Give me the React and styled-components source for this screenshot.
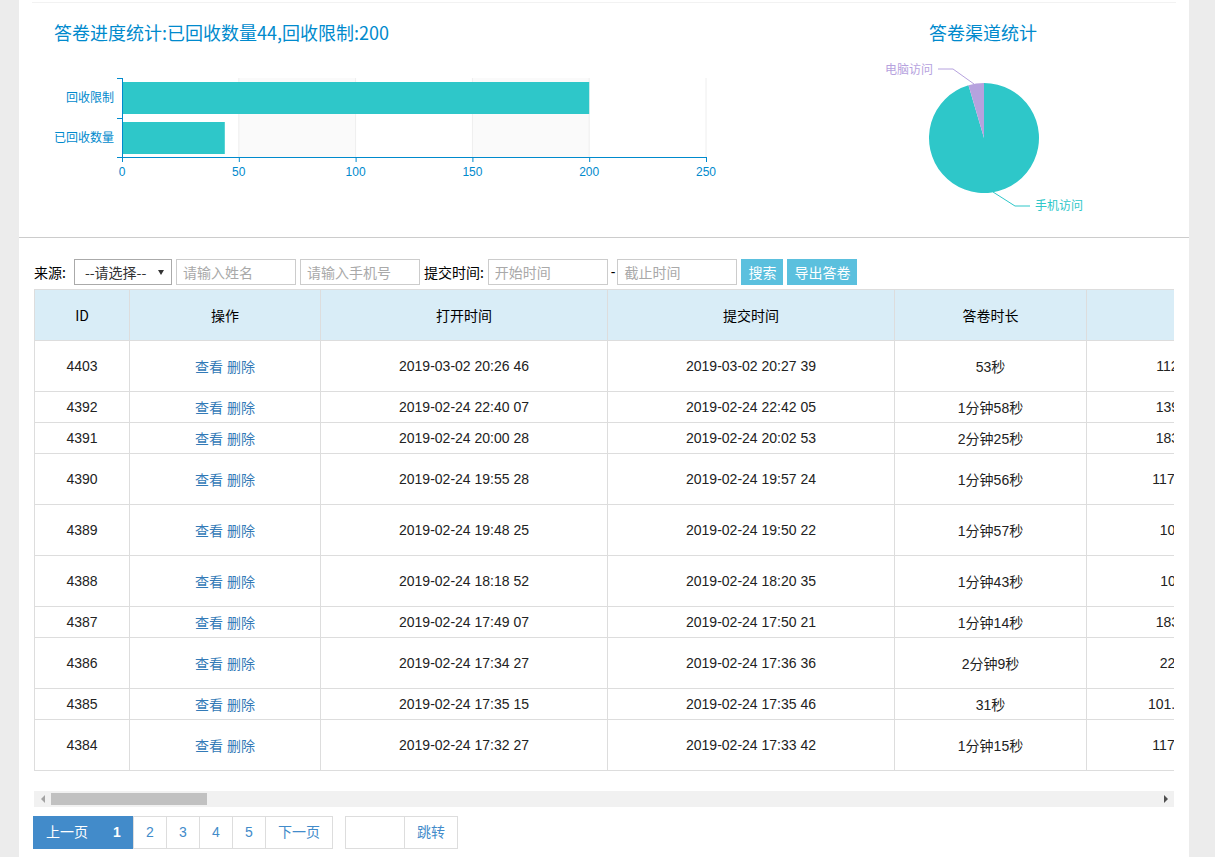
import React from "react";
import styled, { createGlobalStyle } from "styled-components";

const GlobalStyle = createGlobalStyle`
  html, body {
    margin: 0;
    padding: 0;
    background: #ececec;
    font-family: "Liberation Sans", "Noto Sans CJK SC", sans-serif;
    font-size: 14px;
    color: #333;
  }
  * { box-sizing: border-box; }
`;

const rows = [
  { id: 4403, open: "2019-03-02 20:26 46", submit: "2019-03-02 20:27 39", dur: "53秒", ip: "112.17.236.45", tall: true },
  { id: 4392, open: "2019-02-24 22:40 07", submit: "2019-02-24 22:42 05", dur: "1分钟58秒", ip: "139.207.62.18", tall: false },
  { id: 4391, open: "2019-02-24 20:00 28", submit: "2019-02-24 20:02 53", dur: "2分钟25秒", ip: "183.14.133.71", tall: false },
  { id: 4390, open: "2019-02-24 19:55 28", submit: "2019-02-24 19:57 24", dur: "1分钟56秒", ip: "117.136.40.212", tall: true },
  { id: 4389, open: "2019-02-24 19:48 25", submit: "2019-02-24 19:50 22", dur: "1分钟57秒", ip: "106.8.12.178", tall: true },
  { id: 4388, open: "2019-02-24 18:18 52", submit: "2019-02-24 18:20 35", dur: "1分钟43秒", ip: "101.8.45.119", tall: true },
  { id: 4387, open: "2019-02-24 17:49 07", submit: "2019-02-24 17:50 21", dur: "1分钟14秒", ip: "183.46.210.33", tall: false },
  { id: 4386, open: "2019-02-24 17:34 27", submit: "2019-02-24 17:36 36", dur: "2分钟9秒", ip: "223.104.6.20", tall: true },
  { id: 4385, open: "2019-02-24 17:35 15", submit: "2019-02-24 17:35 46", dur: "31秒", ip: "101.226.103.106", tall: false },
  { id: 4384, open: "2019-02-24 17:32 27", submit: "2019-02-24 17:33 42", dur: "1分钟15秒", ip: "117.136.79.153", tall: true },
];

const columns = [
  { title: "ID", w: 95 },
  { title: "操作", w: 191 },
  { title: "打开时间", w: 287 },
  { title: "提交时间", w: 287 },
  { title: "答卷时长", w: 192 },
  { title: "IP地址", w: 228 },
];

const TEAL = "#2ec7c9";
const PURPLE = "#b6a2de";
const AXIS = "#008acd";

const Panel = styled.div`
  margin-left: 19px;
  width: 1170px;
  min-height: 857px;
  background: #fff;
`;

const TopLine = styled.div`
  height: 3px;
  margin: 0 13px;
  border-bottom: 1px solid #f2f2f2;
`;

const ChartRow = styled.div`
  display: flex;
  height: 235px;
  border-bottom: 1px solid #ccc;
`;

const BarBlock = styled.div`
  width: 790px;
  display: flex;
  flex-direction: column;
`;

const PieBlock = styled.div`
  width: 348px;
  display: flex;
  flex-direction: column;
`;

const ChartTitle = styled.div`
  height: 47px;
  padding-top: 16px;
  padding-left: ${(p) => (p.$center ? 0 : 35)}px;
  text-align: ${(p) => (p.$center ? "center" : "left")};
  line-height: 26px;
  font-size: 18px;
  color: ${AXIS};
  font-family: "Noto Sans CJK SC", "Liberation Sans", sans-serif;
`;

const ChartSvg = styled.svg`
  display: block;
  font-family: "Liberation Sans", "Noto Sans CJK SC", sans-serif;
  font-size: 12px;
`;

const FilterBar = styled.div`
  display: flex;
  align-items: center;
  gap: 4px;
  padding: 20px 15px 0;
  height: 48px;
`;

const Label = styled.span`
  margin-right: ${(p) => p.$mr || 0}px;
  font-size: 14px;
  color: #000;
  font-family: "Noto Sans CJK SC", "Liberation Sans", sans-serif;
`;

const SelectBox = styled.div`
  position: relative;
  width: 98px;
  height: 26px;
  border: 1px solid #aaa;
  padding-left: 10px;
  line-height: 24px;
  font-size: 14px;
  color: #333;
  font-family: "Noto Sans CJK SC", "Liberation Sans", sans-serif;

  &::after {
    content: "";
    position: absolute;
    right: 7px;
    top: 10px;
    border-left: 3px solid transparent;
    border-right: 3px solid transparent;
    border-top: 5px solid #333;
  }
`;

const TextInput = styled.input`
  width: 120px;
  height: 26px;
  border: 1px solid #ccc;
  padding: 0 6px;
  font-size: 14px;
  font-family: "Noto Sans CJK SC", "Liberation Sans", sans-serif;
  outline: none;

  &::placeholder {
    color: #a9a9a9;
  }
`;

const Dash = styled.span`
  margin: 0 -2px 0 -1px;
  color: #000;
`;

const InfoButton = styled.button`
  height: 26px;
  padding: 0 7px;
  border: none;
  background: #5bc0de;
  color: #fff;
  font-size: 14px;
  font-family: "Noto Sans CJK SC", "Liberation Sans", sans-serif;
  cursor: pointer;
`;

const ScrollWrap = styled.div`
  margin: 3px 15px 0;
  overflow: hidden;
`;

const Table = styled.table`
  width: 1280px;
  table-layout: fixed;
  border-collapse: collapse;
  border: 1px solid #ddd;
`;

const HeadCell = styled.th`
  width: ${(p) => p.$w}px;
  height: 51px;
  padding: 0 8px;
  background: #d9edf7;
  border: 1px solid #ddd;
  font-weight: normal;
  color: #000;
  text-align: center;
  font-family: "Noto Sans CJK SC", "Liberation Sans", sans-serif;
`;

const Cell = styled.td`
  height: ${(p) => (p.$tall ? 51 : 31)}px;
  padding: 0 8px;
  border: 1px solid #ddd;
  text-align: center;
  white-space: nowrap;
  color: #222;
  font-family: "Liberation Sans", "Noto Sans CJK SC", sans-serif;
`;

const ActionLink = styled.a`
  color: #337ab7;
  text-decoration: none;
  font-family: "Noto Sans CJK SC", "Liberation Sans", sans-serif;
  & + & { margin-left: 4px; }
`;

const ScrollTrack = styled.div`
  display: flex;
  align-items: center;
  margin-top: 20px;
  height: 16px;
  background: #f1f1f1;
`;

const ScrollArrow = styled.div`
  width: 17px;
  height: 16px;
  display: flex;
  align-items: center;
  justify-content: center;

  &::before {
    content: "";
    border-top: 4px solid transparent;
    border-bottom: 4px solid transparent;
    ${(p) =>
      p.$dir === "left"
        ? "border-right: 4px solid #a3a3a3;"
        : "border-left: 4px solid #505050;"}
  }
`;

const ScrollThumb = styled.div`
  width: 156px;
  height: 12px;
  background: #c1c1c1;
`;

const ScrollSpace = styled.div`
  flex: 1;
`;

const Pager = styled.div`
  display: flex;
  align-items: center;
  margin: 9px 0 0 14px;
`;

const PageItem = styled.a`
  width: ${(p) => p.$w}px;
  height: 33px;
  line-height: 31px;
  text-align: center;
  border: 1px solid ${(p) => (p.$active ? "#428bca" : "#ddd")};
  margin-left: ${(p) => (p.$first ? 0 : -1)}px;
  background: ${(p) => (p.$active ? "#428bca" : "#fff")};
  color: ${(p) => (p.$active ? "#fff" : "#428bca")};
  font-weight: ${(p) => (p.$bold ? "bold" : "normal")};
  font-size: 14px;
  font-family: "Liberation Sans", "Noto Sans CJK SC", sans-serif;
  text-decoration: none;
`;

const JumpGroup = styled.div`
  display: flex;
  margin-left: 12px;
`;

const JumpInput = styled.input`
  width: 60px;
  height: 33px;
  border: 1px solid #ddd;
  outline: none;
`;

const BarChart = () => {
  const x0 = 103;
  const unit = 584 / 250;
  const ticks = [0, 50, 100, 150, 200, 250];
  return (
    <ChartSvg width="790" height="184">
      <rect x={x0 + 50 * unit} y="28" width={50 * unit} height="79" fill="#fafafa" />
      <rect x={x0 + 150 * unit} y="28" width={50 * unit} height="79" fill="#fafafa" />
      {ticks.slice(1).map((t) => (
        <line key={t} x1={x0 + t * unit} x2={x0 + t * unit} y1="28" y2="107" stroke="#eee" />
      ))}
      <rect x={x0} y="32" width={200 * unit} height="32" fill={TEAL} />
      <rect x={x0} y="72" width={44 * unit} height="32" fill={TEAL} />
      <line x1={x0 + 0.5} x2={x0 + 0.5} y1="28" y2="107" stroke={AXIS} />
      <line x1={x0} x2={x0 + 584} y1="107.5" y2="107.5" stroke={AXIS} />
      {[28, 68, 107].map((y) => (
        <line key={y} x1={x0 - 5} x2={x0} y1={y + 0.5} y2={y + 0.5} stroke={AXIS} />
      ))}
      {ticks.map((t) => (
        <g key={t}>
          <line x1={x0 + t * unit + 0.5} x2={x0 + t * unit + 0.5} y1="107" y2="112" stroke={AXIS} />
          <text x={x0 + t * unit} y="126" textAnchor="middle" fill={AXIS}>{t}</text>
        </g>
      ))}
      <text x="95" y="52" textAnchor="end" fill={AXIS}>回收限制</text>
      <text x="95" y="92" textAnchor="end" fill={AXIS}>已回收数量</text>
    </ChartSvg>
  );
};

const PieChart = () => {
  const cx = 175;
  const cy = 88;
  const r = 55;
  const a = (-16.4 * Math.PI) / 180;
  const px = cx + r * Math.sin(a);
  const py = cy - r * Math.cos(a);
  return (
    <ChartSvg width="348" height="184">
      <path d={`M${cx} ${cy} L${cx} ${cy - r} A${r} ${r} 0 1 1 ${px} ${py} Z`} fill={TEAL} />
      <path d={`M${cx} ${cy} L${px} ${py} A${r} ${r} 0 0 1 ${cx} ${cy - r} Z`} fill={PURPLE} />
      <polyline points="165,34 144,19 129,19" fill="none" stroke={PURPLE} />
      <text x="124" y="24" textAnchor="end" fill={PURPLE}>电脑访问</text>
      <polyline points="184,142 206,156 221,156" fill="none" stroke={TEAL} />
      <text x="226" y="160" fill={TEAL}>手机访问</text>
    </ChartSvg>
  );
};

const App = () => {
  return (
    <>
      <GlobalStyle />
      <Panel>
        <TopLine />
        <ChartRow>
          <BarBlock>
            <ChartTitle>答卷进度统计:已回收数量44,回收限制:200</ChartTitle>
            <BarChart />
          </BarBlock>
          <PieBlock>
            <ChartTitle $center>答卷渠道统计</ChartTitle>
            <PieChart />
          </PieBlock>
        </ChartRow>

        <FilterBar>
          <Label $mr={4}>来源:</Label>
          <SelectBox>--请选择--</SelectBox>
          <TextInput placeholder="请输入姓名" />
          <TextInput placeholder="请输入手机号" />
          <Label>提交时间:</Label>
          <TextInput placeholder="开始时间" />
          <Dash>-</Dash>
          <TextInput placeholder="截止时间" />
          <InfoButton>搜索</InfoButton>
          <InfoButton>导出答卷</InfoButton>
        </FilterBar>

        <ScrollWrap>
          <Table>
            <thead>
              <tr>
                {columns.map((c) => (
                  <HeadCell key={c.title} $w={c.w}>{c.title}</HeadCell>
                ))}
              </tr>
            </thead>
            <tbody>
              {rows.map((r) => (
                <tr key={r.id}>
                  <Cell $tall={r.tall}>{r.id}</Cell>
                  <Cell $tall={r.tall}>
                    <ActionLink href="#">查看</ActionLink>
                    <ActionLink href="#">删除</ActionLink>
                  </Cell>
                  <Cell $tall={r.tall}>{r.open}</Cell>
                  <Cell $tall={r.tall}>{r.submit}</Cell>
                  <Cell $tall={r.tall}>{r.dur}</Cell>
                  <Cell $tall={r.tall}>{r.ip}</Cell>
                </tr>
              ))}
            </tbody>
          </Table>
          <ScrollTrack>
            <ScrollArrow $dir="left" />
            <ScrollThumb />
            <ScrollSpace />
            <ScrollArrow $dir="right" />
          </ScrollTrack>
        </ScrollWrap>

        <Pager>
          <PageItem href="#" $w={68} $first $active>上一页</PageItem>
          <PageItem href="#" $w={34} $active $bold>1</PageItem>
          <PageItem href="#" $w={34}>2</PageItem>
          <PageItem href="#" $w={34}>3</PageItem>
          <PageItem href="#" $w={34}>4</PageItem>
          <PageItem href="#" $w={34}>5</PageItem>
          <PageItem href="#" $w={68}>下一页</PageItem>
          <JumpGroup>
            <JumpInput />
            <PageItem href="#" $w={54}>跳转</PageItem>
          </JumpGroup>
        </Pager>
      </Panel>
    </>
  );
};

export default App;
